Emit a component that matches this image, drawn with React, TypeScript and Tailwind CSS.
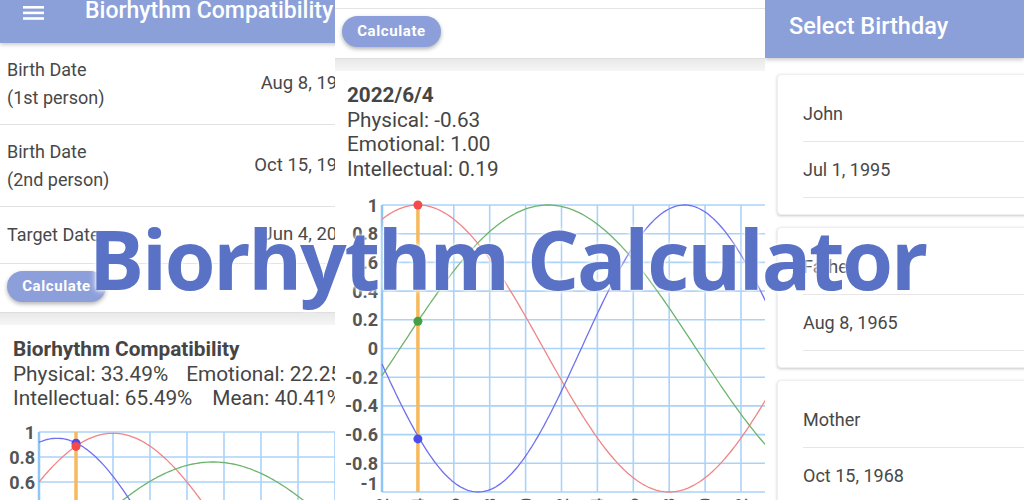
const levels = [1, 0.8, 0.6, 0.4, 0.2, 0, -0.2, -0.4, -0.6, -0.8, -1];

function linePath(fn: (x: number) => number, from: number, to: number, zero: number, unit: number) {
  let d = "";
  for (let x = from; x <= to; x += 2) {
    const y = zero - fn(x) * unit;
    d += `${x === from ? "M" : "L"}${x.toFixed(1)} ${y.toFixed(1)} `;
  }
  return d;
}

function Grid({ left, top, unit, step, width, height }: { left: number; top: number; unit: number; step: number; width: number; height: number }) {
  const zero = top + unit;
  const cols = [];
  for (let x = left; x <= width + step; x += step) cols.push(x);
  return (
    <g>
      {levels.map((v) => (
        <line key={v} x1={left} x2={width} y1={zero - v * unit} y2={zero - v * unit} stroke="#abd3f9" strokeWidth={1.6} />
      ))}
      {cols.map((x) => (
        <line key={x} x1={x} x2={x} y1={top} y2={Math.min(height, zero + unit)} stroke="#abd3f9" strokeWidth={1.6} />
      ))}
      <line x1={left} x2={left} y1={top} y2={zero + unit} stroke="#8fc5f7" strokeWidth={2.5} />
      {levels.map((v) => (
        <text
          key={v}
          x={left - 4}
          // the bottom label is lifted so it stays inside the plot
          y={zero - v * unit - (v === -1 ? 9 : 0)}
          textAnchor="end"
          dominantBaseline="central"
          fontFamily="Roboto, sans-serif"
          fontWeight={700}
          fontSize={18}
          fill="#555"
        >
          {v === 0 ? "0" : String(v)}
        </text>
      ))}
    </g>
  );
}

// single day chart: red emotional, green intellectual, blue physical
function DayChart() {
  const left = 47;
  const top = 15;
  const unit = 143.5;
  const zero = top + unit;
  const step = 35.9;
  const mark = left + step;
  const day = (x: number) => (x - mark) / (step / 2);
  const curves = [
    { color: "#f08585", fn: (x: number) => Math.cos((2 * Math.PI * day(x)) / 28) },
    { color: "#6cb46c", fn: (x: number) => Math.cos((2 * Math.PI * (day(x) - 7.25)) / 33) },
    { color: "#7070ef", fn: (x: number) => -Math.cos((2 * Math.PI * (day(x) - 3.35)) / 23) },
  ];
  const dots = [
    { color: "#f44a4a", v: 1 },
    { color: "#45a045", v: 0.19 },
    { color: "#4b4bf0", v: -0.63 },
  ];
  const ticks = ["6/2", "6/4", "6/6", "6/8", "6/10", "6/12", "6/14", "6/16", "6/18", "6/20", "6/22", "6/24"];
  return (
    <svg width={430} height={330} className="block">
      <Grid left={left} top={top} unit={unit} step={step} width={430} height={330} />
      <line x1={mark} x2={mark} y1={top} y2={zero + unit} stroke="#f6b95c" strokeWidth={3.5} />
      {curves.map((c) => (
        <path key={c.color} d={linePath(c.fn, left, 432, zero, unit)} fill="none" stroke={c.color} strokeWidth={1.3} />
      ))}
      {dots.map((d) => (
        <circle key={d.color} cx={mark} cy={zero - d.v * unit} r={4.5} fill={d.color} />
      ))}
      {ticks.map((t, i) => {
        const x = left + i * step;
        return (
          <text
            key={t}
            x={x}
            y={zero + unit + 6}
            transform={`rotate(-90 ${x} ${zero + unit + 6})`}
            textAnchor="end"
            dominantBaseline="central"
            fontFamily="Roboto, sans-serif"
            fontWeight={700}
            fontSize={17}
            fill="#555"
          >
            {t}
          </text>
        );
      })}
    </svg>
  );
}

// compatibility chart, only its top is on screen
function MatchChart() {
  const left = 39;
  const top = 21;
  const unit = 125;
  const zero = top + unit;
  const mark = left + 37;
  const curves = [
    { color: "#f08585", fn: (x: number) => 0.99 * Math.cos((x - 113) / 80.4) },
    { color: "#6cb46c", fn: (x: number) => 0.76 * Math.cos((x - 213) / 97) },
    { color: "#7070ef", fn: (x: number) => 0.95 * Math.cos((x - 57) / 68) },
  ];
  return (
    <svg width={335} height={100} className="block">
      <Grid left={left} top={top} unit={unit} step={37} width={335} height={100} />
      <line x1={mark} x2={mark} y1={top} y2={100} stroke="#f6b95c" strokeWidth={3.5} />
      {curves.map((c) => (
        <path key={c.color} d={linePath(c.fn, left, 335, zero, unit)} fill="none" stroke={c.color} strokeWidth={1.3} />
      ))}
      <circle cx={mark} cy={zero - 0.91 * unit} r={4.5} fill="#4b4bf0" />
      <circle cx={mark} cy={zero - 0.885 * unit} r={4.5} fill="#f44a4a" />
    </svg>
  );
}

function MenuIcon() {
  return (
    <svg width={22} height={22} viewBox="0 0 22 22" className="ml-[23px] mt-[5px] shrink-0">
      <rect x={0} y={1} width={21} height={2.6} fill="#fff" />
      <rect x={0} y={6.6} width={21} height={2.6} fill="#fff" />
      <rect x={0} y={12.2} width={21} height={2.6} fill="#fff" />
    </svg>
  );
}

function CalcButton() {
  return (
    <button className="h-[31px] w-[99px] rounded-full bg-[#8d9fda] text-[15px] font-bold tracking-[0.6px] text-white shadow-[0_2px_4px_rgba(0,0,0,0.3)]">
      Calculate
    </button>
  );
}

function DateRow({ label, sub, value }: { label: string; sub?: string; value: string }) {
  return (
    <div
      className={`flex w-[372px] items-center justify-between border-b border-[#e2e2e2] pl-[7px] pr-[14px] text-[18px] text-[#484848] ${
        sub ? "h-[82px]" : "h-[57px]"
      }`}
    >
      <div className="leading-[28px]">
        <div>{label}</div>
        {sub && <div>{sub}</div>}
      </div>
      <div className="text-[18.5px]">{value}</div>
    </div>
  );
}

function Band() {
  return <div className="h-[12px] bg-gradient-to-b from-[#e9e9e9] to-[#f6f6f6]" />;
}

function PersonCard({ name, date }: { name: string; date: string }) {
  return (
    <div className="ml-[12px] w-[280px] rounded-[4px] border border-[#efefef] bg-white pb-[16px] pl-[25px] pt-[11px] text-[18px] text-[#484848] shadow-[0_1px_3px_rgba(0,0,0,0.22)]">
      <div className="flex h-[56px] items-center border-b border-[#e6e6e6]">{name}</div>
      <div className="flex h-[56px] items-center border-b border-[#e6e6e6]">{date}</div>
    </div>
  );
}

export default function App() {
  return (
    <div className="relative flex h-[500px] w-[1024px] overflow-hidden bg-white font-['Roboto',sans-serif]">
      {/* compatibility screen */}
      <div className="w-[335px] shrink-0 overflow-hidden">
        <div className="relative z-10 flex h-[43px] w-[372px] items-start bg-[#8b9fd9] shadow-[0_2px_4px_rgba(0,0,0,0.2)]">
          <MenuIcon />
          <div className="-mt-[2px] ml-[40px] whitespace-nowrap text-[23px] font-medium leading-[26px] text-white">
            Biorhythm Compatibility
          </div>
        </div>
        <DateRow label="Birth Date" sub="(1st person)" value="Aug 8, 1965" />
        <DateRow label="Birth Date" sub="(2nd person)" value="Oct 15, 1968" />
        <DateRow label="Target Date" value="Jun 4, 2022" />
        <div className="h-[49px] border-b border-[#dedede] pl-[7px] pt-[7px]">
          <CalcButton />
        </div>
        <Band />
        <div className="whitespace-nowrap px-[13px] pt-[12px] text-[20.8px] leading-[24.6px] text-[#454545]">
          <div className="font-bold">Biorhythm Compatibility</div>
          <div>
            Physical: 33.49%<span className="ml-[18px]">Emotional: 22.25%</span>
          </div>
          <div>
            Intellectual: 65.49%<span className="ml-[20px]">Mean: 40.41%</span>
          </div>
        </div>
        <MatchChart />
      </div>

      {/* daily result screen */}
      <div className="w-[430px] shrink-0 overflow-hidden">
        <div className="h-[9px] border-b border-[#e4e4e4]" />
        <div className="h-[50px] border-b border-[#dedede] pl-[7px] pt-[7px]">
          <CalcButton />
        </div>
        <Band />
        <div className="px-[12px] pt-[12px] text-[20.7px] leading-[24.6px] text-[#454545]">
          <div className="font-bold">2022/6/4</div>
          <div>Physical: -0.63</div>
          <div>Emotional: 1.00</div>
          <div>Intellectual: 0.19</div>
        </div>
        <div className="mt-[8.6px]">
          <DayChart />
        </div>
      </div>

      {/* birthday picker */}
      <div className="flex-1 overflow-hidden bg-white">
        <div className="relative z-10 flex h-[58px] items-center bg-[#8b9fd9] pl-[24px] shadow-[0_2px_4px_rgba(0,0,0,0.2)]">
          <span className="-mt-[5px] text-[23.5px] font-medium text-white">Select Birthday</span>
        </div>
        <div className="flex flex-col gap-[12px] pt-[16px]">
          <PersonCard name="John" date="Jul 1, 1995" />
          <PersonCard name="Father" date="Aug 8, 1965" />
          <PersonCard name="Mother" date="Oct 15, 1968" />
        </div>
      </div>

      <div className="absolute left-[89px] top-[217px] whitespace-nowrap font-['Open_Sans',sans-serif] text-[82px] font-bold leading-[82px] tracking-[-2.2px] text-[#5a72c5] [text-shadow:0_0_3px_#fff,0_0_7px_#fff]">
        Biorhythm Calculator
      </div>
    </div>
  );
}
